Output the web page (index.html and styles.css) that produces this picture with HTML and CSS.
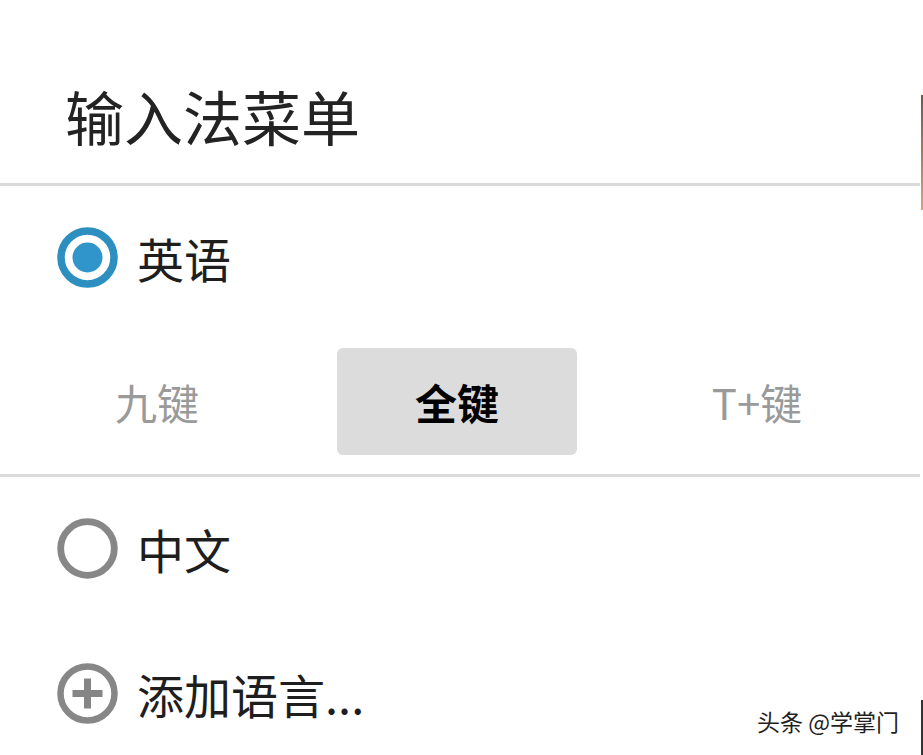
FILE: index.html
```
<!DOCTYPE html>
<html lang="zh-CN">
<head>
<meta charset="utf-8">
<title>输入法菜单</title>
<link rel="stylesheet" href="styles.css">
</head>
<body>
<div class="menu">
  <div class="title">输入法菜单</div>
  <div class="divider"></div>
  <div class="item">
    <svg class="icon" viewBox="0 0 61 61" width="61" height="61">
      <circle cx="30.5" cy="30.5" r="26.5" fill="none" stroke="#2d8ec0" stroke-width="7.5"/>
      <circle cx="30.5" cy="30.5" r="15" fill="#2f95cb"/>
    </svg>
    <span class="label">英语</span>
  </div>
  <div class="segments">
    <div class="seg">九键</div>
    <div class="seg seg-active"><span class="seg-btn">全键</span></div>
    <div class="seg">T+键</div>
  </div>
  <div class="divider"></div>
  <div class="item">
    <svg class="icon" viewBox="0 0 61 61" width="61" height="61">
      <circle cx="30.5" cy="30.5" r="26.8" fill="none" stroke="#878787" stroke-width="6.8"/>
    </svg>
    <span class="label">中文</span>
  </div>
  <div class="item item-last">
    <svg class="icon" viewBox="0 0 61 61" width="61" height="61">
      <circle cx="30.5" cy="30.5" r="27" fill="none" stroke="#878787" stroke-width="6.5"/>
      <rect x="15.5" y="27" width="30" height="7" fill="#858585"/>
      <rect x="27" y="15.5" width="7" height="30" fill="#858585"/>
    </svg>
    <span class="label">添加语言...</span>
  </div>
</div>
<div class="edge edge-top"></div>
<div class="edge edge-bottom"></div>
<div class="watermark">头条 @学掌门</div>
</body>
</html>
```
FILE: styles.css
```
html, body {
  margin: 0;
  padding: 0;
  background: #ffffff;
}

body {
  width: 923px;
  height: 755px;
  overflow: hidden;
  position: relative;
  font-family: "Noto Sans CJK SC", "Noto Sans", sans-serif;
}

.menu {
  width: 920px;
}

.title {
  height: 183px;
  box-sizing: border-box;
  padding: 86px 0 0 65px;
  font-size: 59px;
  line-height: 59px;
  color: #232323;
}

.divider {
  height: 3px;
  background: #dadada;
}

.item {
  height: 142px;
  display: flex;
  align-items: center;
  padding-left: 57px;
}

.item-last {
  height: 148px;
}

.icon {
  flex: none;
  display: block;
}

.label {
  margin-left: 19px;
  font-size: 47px;
  line-height: 47px;
  color: #1e1e1e;
}

.segments {
  display: grid;
  grid-template-columns: 300px 300px 300px;
  padding: 20px 0 19px 7px;
  height: 107px;
}

.seg {
  display: flex;
  align-items: center;
  justify-content: center;
  font-size: 42px;
  line-height: 42px;
  color: #9a9a9a;
}

.seg-btn {
  width: 240px;
  height: 107px;
  display: flex;
  align-items: center;
  justify-content: center;
  background: #dcdcdc;
  border-radius: 6px;
  color: #000000;
  font-weight: 700;
}

.edge {
  position: absolute;
  right: 0;
  width: 2px;
}

.edge-top {
  top: 95px;
  height: 115px;
  background: linear-gradient(#6b5a4e, #d9a27c);
}

.edge-bottom {
  top: 700px;
  height: 55px;
  background: #333333;
}

.watermark {
  position: absolute;
  left: 757px;
  top: 706px;
  font-size: 23px;
  line-height: 30px;
  color: #1f1f1f;
  white-space: nowrap;
  text-shadow: 1px 1px 0 #ffffff, -1px -1px 0 #ffffff, 1px -1px 0 #ffffff, -1px 1px 0 #ffffff;
}
```
